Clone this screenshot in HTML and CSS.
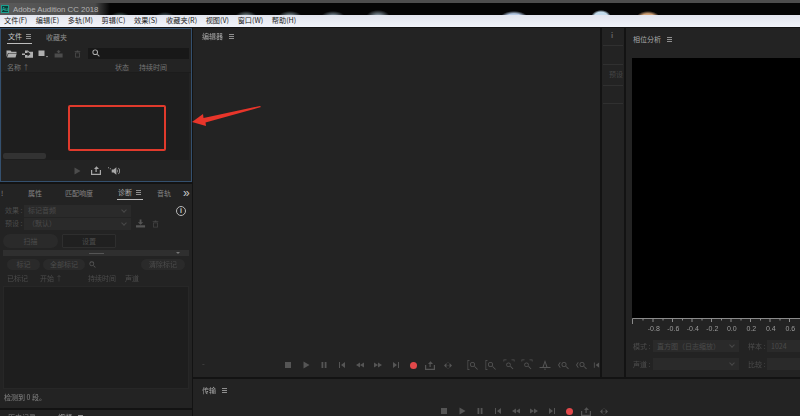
FILE: index.html
```html
<!DOCTYPE html>
<html lang="zh">
<head>
<meta charset="utf-8">
<title>Adobe Audition CC 2018</title>
<link rel="stylesheet" href="styles.css">
</head>
<body>
<svg class="defs" width="0" height="0">
  <symbol id="stop" viewBox="0 0 8 8"><rect x="1" y="1" width="6" height="6"/></symbol>
  <symbol id="play" viewBox="0 0 8 8"><path d="M1.5 0.5 7.5 4 1.5 7.500z"/></symbol>
  <symbol id="pause" viewBox="0 0 8 8"><path d="M1.5 1h1.800v6H1.500zM4.700 1h1.800v6H4.700z"/></symbol>
  <symbol id="first" viewBox="0 0 8 8"><path d="M1 1h1v6H1zM7 1v6L3 4z"/></symbol>
  <symbol id="rew" viewBox="0 0 8 8"><path d="M4 1.500v5L0 4zM8 1.500v5L4 4z"/></symbol>
  <symbol id="ffw" viewBox="0 0 8 8"><path d="M0 1.500v5L4 4zM4 1.500v5L8 4z"/></symbol>
  <symbol id="last" viewBox="0 0 8 8"><path d="M1 1v6l4-3zM6 1h1v6H6z"/></symbol>
  <symbol id="loop" viewBox="0 0 10 9"><path d="M0 4h1.200v3.800h7.600V4H10v5H0zM4.500 6V3H3L5.500.2 8 3H5.700v3z"/></symbol>
  <symbol id="skip" viewBox="0 0 10 8"><path d="M1 4l2.500-2.500v5zM9 4 6.500 1.500v5zM4.700.5h.6v1h-.6zM4.700 3.500h.6v1h-.6zM4.700 6.500h.6v1h-.6z"/></symbol>
  <symbol id="zoomin" viewBox="0 0 12 12"><path d="M.5 1h2v.7H1.200v8.600h1.300v.7h-2zM5.500 3a2.500 2.500 0 1 1 0 5 2.500 2.500 0 0 1 0-5zm0 .8a1.700 1.700 0 1 0 0 3.400 1.700 1.700 0 0 0 0-3.400zM7.300 7.800l.6-.6 3 3-.6.6z"/></symbol>
  <symbol id="zoomwide" viewBox="0 0 12 12"><path d="M.5.500h3v.7H1.200v1.300H.5zM8.500.500h3v2h-.7V1.200H8.500zM5.500 3.500a2.300 2.300 0 1 1 0 4.600 2.300 2.300 0 0 1 0-4.600zm0 .8a1.500 1.500 0 1 0 0 3 1.500 1.500 0 0 0 0-3zM7.200 7.700l.6-.6 2.600 2.600-.6.600z"/></symbol>
  <symbol id="bracketq" viewBox="0 0 12 12"><path d="M3 3 1 6l2 3 .6-.4L2.100 6l1.500-2.600zM7 3a2.500 2.500 0 1 1 0 5 2.500 2.500 0 0 1 0-5zm0 .8a1.700 1.700 0 1 0 0 3.400 1.700 1.700 0 0 0 0-3.400zM8.800 7.800l.6-.6 2.400 2.400-.6.600z"/></symbol>
  <symbol id="bell" viewBox="0 0 12 12"><path d="M6 1 8.500 8h3v1H.5V8h3zm0 2.500L4.700 8h2.600zM5.500 9.500h1V11h-1z"/></symbol>
  <symbol id="mag" viewBox="0 0 10 10"><path d="M4 .5a3.500 3.500 0 1 1 0 7 3.500 3.500 0 0 1 0-7zm0 1.200a2.300 2.300 0 1 0 0 4.600 2.300 2.300 0 0 0 0-4.600zM6.300 7.100l.8-.8 2.500 2.500-.8.800z"/></symbol>
  <symbol id="folder" viewBox="0 0 11 8"><path d="M.5.500h4l1 1.200h5v1.300H2L.5 7zM2.500 3.500h8.200L9.500 7.500H1z"/></symbol>
  <symbol id="folderin" viewBox="0 0 11 8"><path d="M3 .5h3l1 1.200h4v6H3V5h2.500v1.500L8.500 4 5.500 1.500V3H3zM0 3.500h3V5H0z"/></symbol>
  <symbol id="doc" viewBox="0 0 11 8"><path d="M.5.500h6v5.500h-6zM8 6h2L9 7.500z"/></symbol>
  <symbol id="insert" viewBox="0 0 11 9"><path d="M0 4h9v4.500H0zM3.500 3.500V2H2L4.500 0 7 2H5.500v1.500z"/></symbol>
  <symbol id="download" viewBox="0 0 11 9"><path d="M0 6.500h10v2.500H0zM4 0h2v3h2L5 6 2 3h2z"/></symbol>
  <symbol id="trash" viewBox="0 0 8 10"><path d="M.5 1.500h7v1h-7zM3 .500h2v1H3zM1 3h6v6.500H1zm1 1v4.500h4V4z"/></symbol>
</svg>

<header class="titlebar">
  <span class="au-logo">Au</span>
  <span class="app-name">Adobe Audition CC 2018</span>
</header>
<nav class="menubar">
  <span>文件(F)</span><span>编辑(E)</span><span>多轨(M)</span><span>剪辑(C)</span><span>效果(S)</span><span>收藏夹(R)</span><span>视图(V)</span><span>窗口(W)</span><span>帮助(H)</span>
</nav>

<main class="workspace">
  <div class="col-left">
    <section class="panel files">
      <div class="tabs files-tabs">
        <span class="tab active">文件 <i class="ham"></i></span>
        <span class="tab">收藏夹</span>
      </div>
      <div class="files-tools">
        <svg class="ic ic-f"><use href="#folder"/></svg>
        <svg class="ic ic-f"><use href="#folderin"/></svg>
        <svg class="ic ic-f"><use href="#doc"/></svg>
        <svg class="ic ic-f dim"><use href="#insert"/></svg>
        <svg class="ic ic-t dim"><use href="#trash"/></svg>
        <div class="search"><svg class="ic ic-s"><use href="#mag"/></svg></div>
      </div>
      <div class="files-head">
        <span class="fh-name">名称 <b>↑</b></span><span class="fh-state">状态</span><span>持续时间</span>
      </div>
      <div class="files-list"><div class="scrollthumb"></div></div>
      <div class="files-ctrl">
        <svg class="ic ic-p dim"><use href="#play"/></svg>
        <svg class="ic ic-l"><use href="#loop"/></svg>
        <svg class="ic ic-v" viewBox="0 0 14 10"><path d="M0 1h1v1H0zM2 2h1v1H2zM4 3.500h2L9 1v8L6 6.500H4zM10 3c1 1 1 3 0 4zM11.500 1.500c2 2 2 5 0 7l-.5-.5c1.500-2 1.500-4 0-6z"/></svg>
      </div>
    </section>

    <section class="panel diag">
      <div class="tabs diag-tabs">
        <span class="mark">!</span>
        <span>属性</span><span>匹配响度</span>
        <span class="tab active">诊断 <i class="ham"></i></span>
        <span>音轨</span>
        <span class="more">»</span>
      </div>
      <div class="diag-row">
        <label>效果 :</label><div class="select wide">标记音频<i class="chev"></i></div>
        <span class="info">i</span>
      </div>
      <div class="diag-row">
        <label>预设 :</label><div class="select wide">（默认）<i class="chev"></i></div>
        <svg class="ic ic-dl"><use href="#download"/></svg>
        <svg class="ic ic-t dim"><use href="#trash"/></svg>
      </div>
      <div class="seg-row">
        <span class="seg">扫描</span><span class="seg on">设置</span>
      </div>
      <div class="collapse"><i></i><b></b></div>
      <div class="mark-row">
        <span class="pill p1">标记</span><span class="pill p2">全部标记</span>
        <svg class="ic ic-m"><use href="#mag"/></svg>
        <span class="pill p3">清除标记</span>
      </div>
      <div class="diag-head">
        <span class="d1">已标记</span><span class="d2">开始 <b>↑</b></span><span class="d3">持续时间</span><span>声道</span>
      </div>
      <div class="diag-list"></div>
      <div class="diag-status">检测到 0 段。</div>
    </section>

    <section class="panel history">
      <span>历史记录</span><span class="hist-video">视频 <i class="ham"></i></span>
    </section>
  </div>

  <div class="col-right">
    <div class="upper">
      <section class="panel editor">
        <div class="ptitle">编辑器 <i class="ham"></i></div>
        <div class="grow"></div>
        <div class="ed-bar">
          <span class="dash">-</span>
          <div class="trans">
            <svg class="t"><use href="#stop"/></svg>
            <svg class="t"><use href="#play"/></svg>
            <svg class="t"><use href="#pause"/></svg>
            <svg class="t"><use href="#first"/></svg>
            <svg class="t"><use href="#rew"/></svg>
            <svg class="t"><use href="#ffw"/></svg>
            <svg class="t"><use href="#last"/></svg>
            <i class="rec"></i>
            <svg class="t tw"><use href="#loop"/></svg>
            <svg class="t tw"><use href="#skip"/></svg>
          </div>
          <div class="zooms">
            <svg class="z"><use href="#zoomin"/></svg>
            <svg class="z"><use href="#zoomin"/></svg>
            <svg class="z"><use href="#zoomwide"/></svg>
            <svg class="z"><use href="#zoomwide"/></svg>
            <svg class="z"><use href="#bell"/></svg>
            <svg class="z"><use href="#bracketq"/></svg>
            <svg class="z"><use href="#bracketq"/></svg>
            <svg class="z z-end"><use href="#first"/></svg>
          </div>
        </div>
      </section>

      <section class="panel narrow">
        <span class="n-i">i</span>
        <div class="n-cell"></div>
        <div class="n-cell n-text">预设</div>
        <div class="n-cell"></div>
      </section>

      <section class="panel phase">
        <div class="ptitle phase-title">相位分析 <i class="ham"></i></div>
        <div class="scope"></div>
        <svg class="axis" width="168" height="7" viewBox="0 0 168 7">
          <path d="M.5 6V.5H168M21 .5V4M40.500 .5V4M60 .5V4M79.500 .5V4M99 .5V4M118.500 .5V4M138 .5V4M157.500 .5V4M11 .5V2.500M31 .5V2.500M50.500 .5V2.500M70 .5V2.500M89.500 .5V2.500M109 .5V2.500M128.500 .5V2.500M148 .5V2.500" fill="none" stroke="#8a8a8a"/>
        </svg>
        <div class="axis-labels">
          <span>-0.8</span><span>-0.6</span><span>-0.4</span><span>-0.2</span><span>0.0</span><span>0.2</span><span>0.4</span><span>0.6</span>
        </div>
        <div class="ph-row">
          <label>模式 :</label><div class="select ph-sel">直方图（日志缩放）<i class="chev"></i></div>
          <label class="ph-l2">样本 :</label><div class="select ph-sel2">1024</div>
        </div>
        <div class="ph-row">
          <label>声道 :</label><div class="select ph-sel"><i class="chev"></i></div>
          <label class="ph-l2">比较 :</label><div class="select ph-sel2"></div>
        </div>
      </section>
    </div>

    <section class="panel transport">
      <div class="ptitle transport-title">传输 <i class="ham"></i></div>
      <div class="trans trans-main">
        <svg class="t"><use href="#stop"/></svg>
        <svg class="t"><use href="#play"/></svg>
        <svg class="t"><use href="#pause"/></svg>
        <svg class="t"><use href="#first"/></svg>
        <svg class="t"><use href="#rew"/></svg>
        <svg class="t"><use href="#ffw"/></svg>
        <svg class="t"><use href="#last"/></svg>
        <i class="rec"></i>
        <svg class="t tw"><use href="#loop"/></svg>
        <svg class="t tw"><use href="#skip"/></svg>
      </div>
    </section>
  </div>
</main>

<div class="redbox"></div>
<svg class="arrow" width="72" height="24" viewBox="0 0 72 24"><path d="M0 16 11 8 11.500 12 68 0 69 1 13.500 16.500 14 20z" fill="#e8352a"/></svg>
</body>
</html>
```
FILE: styles.css
```css
* { box-sizing: border-box; }
html, body { margin: 0; padding: 0; }
body {
  width: 800px; height: 416px; overflow: hidden; position: relative;
  background: #131313;
  font-family: "Noto Sans CJK SC", "Liberation Sans", sans-serif;
  font-size: 7px; color: #8f8f8f; line-height: 1; white-space: nowrap;
  filter: blur(.3px);
}
.defs { position: absolute; }
i, b { font-style: normal; font-weight: normal; }
svg { display: block; fill: currentColor; flex: none; }

.titlebar {
  height: 15px; display: flex; align-items: center; gap: 4px; padding: 0 0 0 1px;
  background:
    radial-gradient(ellipse 10px 7px at 601px 14px, #c4dcec 70%, transparent),
    radial-gradient(ellipse 12px 7px at 648px 15px, #d2a377 60%, transparent),
    radial-gradient(ellipse 14px 7px at 514px 15px, #b4c8e2 60%, transparent),
    radial-gradient(ellipse 10px 5px at 120px 14px, #5d7f78, transparent),
    radial-gradient(ellipse 10px 5px at 165px 14px, #5f7884, transparent),
    radial-gradient(ellipse 11px 6px at 246px 14px, #9ab1b4, transparent),
    radial-gradient(ellipse 12px 6px at 290px 14px, #a7bfc8, transparent),
    radial-gradient(ellipse 12px 6px at 333px 14px, #a7bfd0, transparent),
    radial-gradient(ellipse 12px 7px at 378px 14px, #b0c6d4, transparent),
    linear-gradient(90deg, #5a5a5a 0, #4a4a4a 95px, #050505 110px, #050505 100%);
  border-top: 3px solid #4d4d4d;
}
.au-logo {
  width: 8px; height: 8px; background: #0a3c38; border: 1px solid #1aa08f; color: #3ad0bc;
  font: 5px/6px "Liberation Sans", sans-serif; text-align: center;
}
.app-name { font: 7.800px "Liberation Sans", sans-serif; color: #b4b4b4; }

.menubar {
  height: 12px; display: flex; gap: 8.600px; align-items: center; padding-left: 4px;
  background: linear-gradient(#e2e5ee, #f2f4fa); color: #222; font-size: 7.200px;
}

.workspace { height: 389px; display: flex; padding-top: 1px; gap: 1px; }
.panel { background: #232323; flex: none; }
.col-left { width: 192px; flex: none; display: flex; flex-direction: column; gap: 2px; }
.col-right { flex: 1; display: flex; flex-direction: column; gap: 2px; min-width: 0; }
.upper { height: 349px; display: flex; gap: 2px; flex: none; }

.ham {
  display: inline-block; width: 5px; height: 5px; margin-left: 4px; vertical-align: 0;
  border-top: 1px solid #8f8f8f; border-bottom: 1px solid #8f8f8f;
  background: linear-gradient(#8f8f8f, #8f8f8f) center / 100% 1px no-repeat;
}

/* files panel */
.files { height: 154px; border: 1px solid #34506e; display: flex; flex-direction: column; }
.tabs { display: flex; align-items: center; }
.files-tabs { height: 17px; padding-left: 6px; gap: 14px; flex: none; }
.tab { color: #8f8f8f; height: 100%; display: flex; align-items: center; }
.tab.active { color: #c4c4c4; border-bottom: 1px solid #bdbdbd; padding: 0 1px; }
.files-tabs .tab.active { height: 15px; align-self: flex-start; }
.files-tools { height: 13px; flex: none; display: flex; align-items: center; padding-left: 5px; gap: 5px; color: #b0b0b0; margin-top: 1px; }
.ic-f { width: 11px; height: 8px; }
.ic-t { width: 7px; height: 8px; margin-left: 4px; }
.dim { color: #4c4c4c; }
.search { width: 101px; height: 11px; background: #181818; margin-left: 2px; padding: 1px 0 0 4px; }
.ic-s { width: 8px; height: 8px; color: #b0b0b0; }
.files-head { height: 13px; flex: none; display: flex; align-items: center; padding: 2px 0 0 6px; color: #757575; border-bottom: 1px solid #1c1c1c; }
.files-head .fh-name { width: 108px; }
.files-head .fh-state { width: 24px; }
.files-list { flex: 1; margin: 0 2px 0 1px; background: #1e1e1e; display: flex; align-items: flex-end; padding: 0 0 1px 1px; }
.scrollthumb { width: 43px; height: 6px; background: #323232; border-radius: 2px; }
.files-ctrl { height: 21px; flex: none; display: flex; align-items: center; padding-left: 72px; gap: 10px; color: #a8a8a8; }
.ic-p { width: 8px; height: 8px; }
.ic-l { width: 10px; height: 9px; }
.ic-v { width: 13px; height: 10px; margin-left: -3px; }

/* diagnostics */
.diag { height: 224px; display: flex; flex-direction: column; }
.diag-tabs { height: 20px; padding-bottom: 2px; flex: none; color: #858585; }
.mark { width: 28px; padding-left: 1px; }
.diag-tabs > span:nth-child(3) { margin-left: 23px; }
.diag-tabs .tab.active { margin-left: 24px; height: 14px; color: #b0b0b0; padding: 0 0 0 1px; width: 26px; }
.diag-tabs > span:nth-child(5) { margin-left: 14px; }
.diag-tabs .more { margin-left: 12px; font-size: 12px; color: #c8c8c8; font-family: "Liberation Sans", sans-serif; }
.diag-row { height: 13px; flex: none; display: flex; align-items: center; padding-left: 5px; color: #4c4c4c; }
.diag-row label { width: 19px; }
.select { background: #2a2a2a; color: #4a4a4a; height: 12px; display: flex; align-items: center; padding-left: 4px; position: relative; }
.select.wide { width: 107px; }
.chev {
  position: absolute; right: 5px; top: 3px; width: 4px; height: 4px;
  border-right: 1px solid #484848; border-bottom: 1px solid #484848; transform: rotate(45deg);
}
.info {
  width: 10px; height: 10px; margin-left: 45px; border: 1px solid #b8b8b8; border-radius: 50%; color: #c8c8c8;
  font: bold 7px/8px "Liberation Sans", sans-serif; text-align: center;
}
.ic-dl { width: 10px; height: 9px; margin-left: 5px; color: #555; }
.diag-row .ic-t { margin-left: 6px; color: #444; }
.seg-row { display: flex; gap: 4px; padding: 4px 0 0 3px; height: 18px; flex: none; color: #4c4c4c; }
.seg { width: 55px; height: 14px; background: #2a2a2a; border-radius: 7px; display: flex; align-items: center; justify-content: center; }
.seg.on { width: 54px; background: #202020; border: 1px solid #2e2e2e; border-radius: 1px; }
.collapse { height: 6px; flex: none; margin: 2px 3px 0; background: #2f2f2f; position: relative; display: flex; align-items: center; justify-content: center; }
.collapse i { width: 15px; height: 1px; background: #555; }
.collapse b { position: absolute; right: 9px; top: 2px; border: 2px solid transparent; border-top-color: #777; }
.mark-row { display: flex; flex: none; align-items: center; padding: 3px 0 0 7px; height: 14px; color: #4c4c4c; }
.pill { height: 11px; background: #2a2a2a; border-radius: 6px; display: flex; align-items: center; justify-content: center; }
.p1 { width: 33px; }
.p2 { width: 42px; margin-left: 3px; }
.p3 { width: 44px; margin-left: 45px; }
.ic-m { width: 7px; height: 7px; margin-left: 4px; color: #555; }
.diag-head { height: 14px; flex: none; display: flex; align-items: center; padding: 3px 0 0 7px; color: #4c4c4c; }
.d1 { width: 33px; } .d2 { width: 48px; } .d3 { width: 37px; }
.diag-list { height: 103px; flex: none; margin: 2px 3px 0; background: #1e1e1e; border: 1px solid #272727; }
.diag-status { padding: 5px 0 0 4px; color: #858585; }

.history { flex: 1; padding: 4px 0 0 8px; color: #7e7e7e; }
.hist-video { margin-left: 22px; color: #a8a8a8; }

/* editor */
.editor { flex: 0 0 407px; display: flex; flex-direction: column; }
.ptitle { padding: 5px 0 0 9px; color: #a8a8a8; height: 18px; flex: none; }
.grow { flex: 1; }
.ed-bar { height: 18px; flex: none; display: flex; align-items: flex-start; padding-top: 1px; color: #4f4f4f; }
.dash { width: 91px; padding-left: 9px; font-size: 8px; }
.trans { display: flex; align-items: center; gap: 10px; color: #555; height: 10px; }
.t { width: 8px; height: 8px; }
.tw { width: 10px; height: 9px; margin-right: -2px; }
.rec { width: 7px; height: 7px; border-radius: 50%; background: #e2484a; margin: 0 -2px 0 0; flex: none; }
.zooms { display: flex; gap: 6px; margin-left: 16px; color: #555; align-items: center; height: 10px; }
.z { width: 12px; height: 12px; }
.z-end { width: 7px; height: 8px; }

/* narrow */
.narrow { flex: 0 0 22px; display: flex; flex-direction: column; padding: 4px 1px 0 1px; color: #464646; }
.n-i { height: 13px; padding-left: 8px; color: #666; font-weight: bold; }
.n-cell { border-top: 1px solid #303030; height: 19px; flex: none; }
.n-cell:last-child { border-bottom: 1px solid #303030; }
.n-text { padding: 6px 0 0 6px; overflow: hidden; height: 21px; }

/* phase */
.phase { flex: 1; padding-left: 6px; min-width: 0; display: flex; flex-direction: column; }
.phase-title { padding: 8px 0 0 1px; height: 30px; }
.scope { height: 260px; flex: none; background: #000; }
.axis-labels { display: flex; flex: none; padding-left: 12px; color: #9a9a9a; height: 12px; }
.axis-labels span { width: 19.600px; text-align: center; font-family: "Liberation Sans", sans-serif; }
.ph-row { display: flex; flex: none; align-items: center; height: 18px; color: #4c4c4c; }
.ph-row label { width: 21px; padding-left: 1px; }
.ph-row .ph-l2 { width: 20px; margin-left: 8px; }
.ph-sel { width: 86px; }
.ph-sel2 { flex: 1; }

.transport { flex: 1; display: flex; flex-direction: column; }
.transport-title { padding-top: 8px; }
.trans-main { padding-left: 247px; margin-top: 9px; }

/* annotations */
.redbox { position: absolute; left: 68px; top: 105px; width: 98px; height: 46px; border: 2px solid #e03a2c; border-radius: 2px; }
.arrow { position: absolute; left: 192px; top: 106px; }
```
